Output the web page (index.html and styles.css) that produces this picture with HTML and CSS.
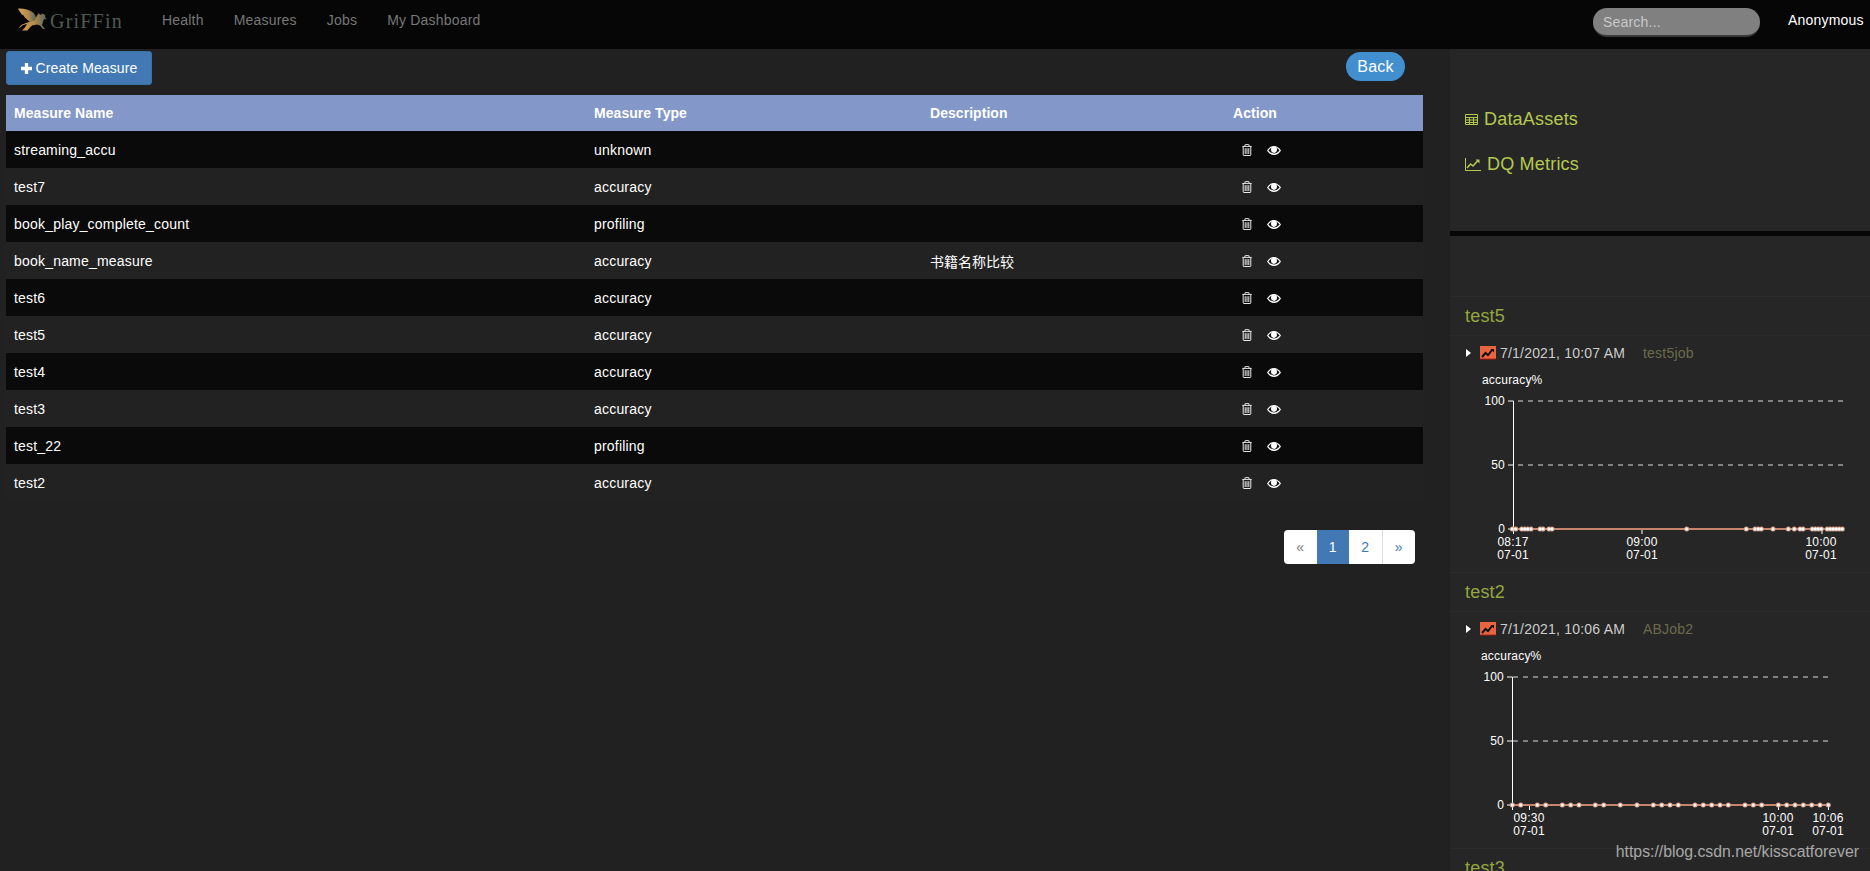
FILE: index.html
```html
<!DOCTYPE html>
<html lang="en">
<head>
    <meta charset="UTF-8">
    <meta name="viewport" content="width=device-width, initial-scale=1.0">
    <title>Griffin - Measures</title>
    <link rel="stylesheet" href="styles.css">
</head>
<body>
    <svg class="icon-defs" width="0" height="0">
        <defs>
            <linearGradient id="griffin-fill" x1="0" y1="0" x2="1" y2="0">
                <stop offset="0" stop-color="#d9a455"/>
                <stop offset="0.55" stop-color="#b58a4c"/>
                <stop offset="1" stop-color="#4e6460"/>
            </linearGradient>
            <symbol id="trash" viewBox="0 0 10 12">
                <path d="M.3 2.4h9.4M3 2.2V1q0-.6.6-.6h2.8q.6 0 .6.6v1.2M1.2 2.6v8.2q0 .7.7.7h6.2q.7 0 .7-.7V2.6" fill="none" stroke="#fff" stroke-width=".9"/>
                <path d="M3.2 4.2v5.8M5 4.2v5.8M6.8 4.2v5.8" fill="none" stroke="#fff" stroke-width=".9"/>
            </symbol>
            <symbol id="eye" viewBox="0 0 14 9">
                <path d="M0 4.5C2 1.5 4.4 0 7 0s5 1.5 7 4.5C12 7.500 9.600 9 7 9S2 7.500 0 4.500z" fill="#fff"/>
                <path d="M1.400 4.500C3 2.600 4 1.900 4.700 1.500 4.200 2.200 4 3 4 3.800c0 1.700 1.300 3.100 3 3.100s3-1.400 3-3.100c0-.8-.2-1.600-.7-2.300.7.400 1.700 1.100 3.300 3-1.700 2-3.600 3-5.600 3s-3.900-1-5.600-3z" fill="#111"/>
            </symbol>
            <symbol id="spark" viewBox="0 0 16 14">
                <rect width="16" height="14" fill="#e8653f"/>
                <path d="M0 13.300h16" stroke="#611" stroke-width="1.200"/>
                <path d="M2 11l3.500-4 2.500 2 4-5" fill="none" stroke="#111" stroke-width="2"/>
                <path d="M10.500 3h3.500v3.500z" fill="#111"/>
            </symbol>
        </defs>
    </svg>

    <div class="header">
        <a class="brand">
            <svg class="griffin" viewBox="0 0 32 24" width="32" height="24">
                <path d="M2 1.500C7 1 13 2.500 17 5.500c2 1.500 3 4 3.500 7L14 15C11 12 9 11.500 7.500 8.500 7.200 8 5.500 7.500 5 6.500 4.500 5.500 3 3.500 2 1.500z" fill="url(#griffin-fill)"/>
                <path d="M21 8.500l2-2.500 1 2 3-1.500 2.500 2-.5 1.500 2 2.500-3-.5-1 3-1 3 3 4h-2l-3-3.500-3-1-5 1-3 3 -1.500 2H6l3-3 2-3.500-4 1-3 2.500L2.500 21 6 17.500l7-2.500 6-2z" fill="url(#griffin-fill)"/>
            </svg>
            <span class="brand-name">GriFFin</span>
        </a>
        <ul class="nav">
            <li>Health</li>
            <li>Measures</li>
            <li>Jobs</li>
            <li>My Dashboard</li>
        </ul>
        <input class="search" type="text" placeholder="Search...">
        <span class="user">Anonymous</span>
    </div>

    <div class="container">
        <div class="left">
            <div class="toolbar">
                <button class="btn-create"><svg class="plus" viewBox="0 0 10 10" width="11" height="11"><path d="M5 0v10M0 5h10" stroke="#fff" stroke-width="3"/></svg>Create Measure</button>
                <button class="btn-back">Back</button>
            </div>
            <table class="measures">
                <thead>
                    <tr>
                        <th class="col-name">Measure Name</th>
                        <th class="col-type">Measure Type</th>
                        <th class="col-desc">Description</th>
                        <th>Action</th>
                    </tr>
                </thead>
                <tbody>
                    <tr><td>streaming_accu</td><td>unknown</td><td></td><td class="actions"><svg class="i-trash"><use href="#trash"/></svg><svg class="i-eye"><use href="#eye"/></svg></td></tr>
                    <tr><td>test7</td><td>accuracy</td><td></td><td class="actions"><svg class="i-trash"><use href="#trash"/></svg><svg class="i-eye"><use href="#eye"/></svg></td></tr>
                    <tr><td>book_play_complete_count</td><td>profiling</td><td></td><td class="actions"><svg class="i-trash"><use href="#trash"/></svg><svg class="i-eye"><use href="#eye"/></svg></td></tr>
                    <tr><td>book_name_measure</td><td>accuracy</td><td class="cjk">书籍名称比较</td><td class="actions"><svg class="i-trash"><use href="#trash"/></svg><svg class="i-eye"><use href="#eye"/></svg></td></tr>
                    <tr><td>test6</td><td>accuracy</td><td></td><td class="actions"><svg class="i-trash"><use href="#trash"/></svg><svg class="i-eye"><use href="#eye"/></svg></td></tr>
                    <tr><td>test5</td><td>accuracy</td><td></td><td class="actions"><svg class="i-trash"><use href="#trash"/></svg><svg class="i-eye"><use href="#eye"/></svg></td></tr>
                    <tr><td>test4</td><td>accuracy</td><td></td><td class="actions"><svg class="i-trash"><use href="#trash"/></svg><svg class="i-eye"><use href="#eye"/></svg></td></tr>
                    <tr><td>test3</td><td>accuracy</td><td></td><td class="actions"><svg class="i-trash"><use href="#trash"/></svg><svg class="i-eye"><use href="#eye"/></svg></td></tr>
                    <tr><td>test_22</td><td>profiling</td><td></td><td class="actions"><svg class="i-trash"><use href="#trash"/></svg><svg class="i-eye"><use href="#eye"/></svg></td></tr>
                    <tr><td>test2</td><td>accuracy</td><td></td><td class="actions"><svg class="i-trash"><use href="#trash"/></svg><svg class="i-eye"><use href="#eye"/></svg></td></tr>
                </tbody>
            </table>
            <ul class="pagination">
                <li class="muted">«</li>
                <li class="active">1</li>
                <li>2</li>
                <li class="last">»</li>
            </ul>
        </div>

        <div class="right">
            <div class="side-nav">
                <a class="side-link">
                    <svg width="13" height="11" viewBox="0 0 13 11"><path d="M.5.5h12v10H.500zM.5 3.500h12M.5 6h12M.5 8.500h12M4.500 3.500v7M8.500 3.500v7" fill="none" stroke="#b5c850" stroke-width="1"/></svg>
                    DataAssets
                </a>
                <a class="side-link">
                    <svg width="16" height="13" viewBox="0 0 16 13"><path d="M.5 0v12.500H16" fill="none" stroke="#b5c850"/><path d="M2 10l3.500-4 2.500 2 4.500-5" fill="none" stroke="#b5c850" stroke-width="1.600"/><path d="M10.500 1.500h4v4z" fill="#b5c850"/></svg>
                    DQ Metrics
                </a>
            </div>
            <div class="band"></div>
            <div class="spacer"></div>

            <div class="metric">
                <h4 class="metric-title">test5</h4>
                <div class="metric-row">
                    <span class="caret"></span>
                    <svg class="i-spark"><use href="#spark"/></svg>
                    <span class="metric-date">7/1/2021, 10:07 AM</span>
                    <span class="metric-job">test5job</span>
                </div>
                <svg class="chart" width="420" height="200">
                    <text class="c-name" x="32" y="16">accuracy%</text>
                    <path class="c-grid" d="M68 33H393M68 97H393"/>
                    <path class="c-axis" d="M58 33H63.500M58 97H63.500M58 161H63.500M63.500 33V166M192 161V166M372 161V166"/>
                    <text class="c-y" x="55" y="37">100</text>
                    <text class="c-y" x="55" y="101">50</text>
                    <text class="c-y" x="55" y="165">0</text>
                    <path class="c-line" d="M62 161H392"/>
                    <path class="c-dot" d="M62.300 161h0M65.700 161h0M71.700 161h0M74.700 161h0M77.700 161h0M81 161h0M90 161h0M93 161h0M99 161h0M102 161h0M236.700 161h0M296.300 161h0M305 161h0M308.300 161h0M311.300 161h0M323 161h0M338.300 161h0M344.300 161h0M350 161h0M353 161h0M362.300 161h0M365.300 161h0M368.300 161h0M371.300 161h0M377.300 161h0M380.300 161h0M383.300 161h0M386.300 161h0M389.300 161h0M392.300 161h0"/>
                    <path class="c-dot-in" d="M62.300 161h0M65.700 161h0M71.700 161h0M74.700 161h0M77.700 161h0M81 161h0M90 161h0M93 161h0M99 161h0M102 161h0M236.700 161h0M296.300 161h0M305 161h0M308.300 161h0M311.300 161h0M323 161h0M338.300 161h0M344.300 161h0M350 161h0M353 161h0M362.300 161h0M365.300 161h0M368.300 161h0M371.300 161h0M377.300 161h0M380.300 161h0M383.300 161h0M386.300 161h0M389.300 161h0M392.300 161h0"/>
                    <text class="c-x" x="63" y="178">08:17</text>
                    <text class="c-x" x="63" y="191">07-01</text>
                    <text class="c-x" x="192" y="178">09:00</text>
                    <text class="c-x" x="192" y="191">07-01</text>
                    <text class="c-x" x="371" y="178">10:00</text>
                    <text class="c-x" x="371" y="191">07-01</text>
                </svg>
            </div>

            <div class="metric">
                <h4 class="metric-title">test2</h4>
                <div class="metric-row">
                    <span class="caret"></span>
                    <svg class="i-spark"><use href="#spark"/></svg>
                    <span class="metric-date">7/1/2021, 10:06 AM</span>
                    <span class="metric-job">ABJob2</span>
                </div>
                <svg class="chart" width="420" height="200">
                    <text class="c-name" x="31" y="16">accuracy%</text>
                    <path class="c-grid" d="M63 33H378M63 97H378"/>
                    <path class="c-axis" d="M57 33H62.500M57 97H62.500M57 161H62.500M62.500 33V166M79.500 161V166M328.500 161V166M378.500 161V166"/>
                    <text class="c-y" x="54" y="37">100</text>
                    <text class="c-y" x="54" y="101">50</text>
                    <text class="c-y" x="54" y="165">0</text>
                    <path class="c-line" d="M62 161H378"/>
                    <path class="c-dot" d="M62.300 161h0M70.700 161h0M87.300 161h0M95.700 161h0M112.300 161h0M120.700 161h0M129 161h0M145.300 161h0M153.700 161h0M170.300 161h0M187 161h0M203.300 161h0M211.700 161h0M220 161h0M228.300 161h0M245 161h0M253.300 161h0M261.700 161h0M270 161h0M278.300 161h0M295 161h0M303.300 161h0M311.700 161h0M328.300 161h0M336.700 161h0M345 161h0M353.300 161h0M361.700 161h0M370 161h0M378.300 161h0"/>
                    <path class="c-dot-in" d="M62.300 161h0M70.700 161h0M87.300 161h0M95.700 161h0M112.300 161h0M120.700 161h0M129 161h0M145.300 161h0M153.700 161h0M170.300 161h0M187 161h0M203.300 161h0M211.700 161h0M220 161h0M228.300 161h0M245 161h0M253.300 161h0M261.700 161h0M270 161h0M278.300 161h0M295 161h0M303.300 161h0M311.700 161h0M328.300 161h0M336.700 161h0M345 161h0M353.300 161h0M361.700 161h0M370 161h0M378.300 161h0"/>
                    <text class="c-x" x="79" y="178">09:30</text>
                    <text class="c-x" x="79" y="191">07-01</text>
                    <text class="c-x" x="328" y="178">10:00</text>
                    <text class="c-x" x="328" y="191">07-01</text>
                    <text class="c-x" x="378" y="178">10:06</text>
                    <text class="c-x" x="378" y="191">07-01</text>
                </svg>
            </div>

            <div class="metric">
                <h4 class="metric-title">test3</h4>
            </div>
        </div>
    </div>

    <div class="watermark">https://blog.csdn.net/kisscatforever</div>
</body>
</html>
```

FILE: styles.css
```css
html, body {
    margin: 0;
    padding: 0;
    height: 100%;
    overflow: hidden;
    font-family: "Liberation Sans", Arial, sans-serif;
    font-size: 14px;
    letter-spacing: 0.2px;
    background: #212121;
    color: white;
}
*, *::before, *::after {
    box-sizing: border-box;
}
.icon-defs {
    position: absolute;
}
.header {
    display: flex;
    align-items: flex-start;
    height: 49px;
    background: #060606;
}
.brand {
    display: flex;
    align-items: flex-start;
    width: 162px;
    padding: 7px 0 0 16px;
}
.brand-name {
    margin: 3px 0 0 2px;
    font-family: "Liberation Serif", serif;
    font-size: 20px;
    letter-spacing: 1.2px;
    color: #4e5a55;
}
.nav {
    display: flex;
    gap: 30px;
    list-style: none;
    margin: 0;
    padding: 12px 0 0 0;
    color: #777;
    line-height: 16px;
}
.search {
    width: 167px;
    height: 29px;
    margin: 8px 0 0 auto;
    padding: 0 10px;
    border: 0;
    border-bottom: 2px solid #3a3a3a;
    border-radius: 14px;
    background: #808080;
    font: 14px "Liberation Sans", Arial, sans-serif;
    letter-spacing: 0.2px;
    color: #fff;
}
.search::placeholder {
    color: #c9c9c9;
}
.user {
    width: 82px;
    margin: 12px 0 0 28px;
    line-height: 16px;
    white-space: nowrap;
}
.container {
    display: flex;
    height: 822px;
}
.left {
    width: 1450px;
    padding: 2px 0 0 6px;
}
.toolbar {
    display: flex;
    justify-content: space-between;
    align-items: flex-start;
    width: 1399px;
    margin-bottom: 10px;
}
.btn-create {
    display: flex;
    align-items: center;
    justify-content: center;
    gap: 4px;
    height: 34px;
    width: 146px;
    padding: 0;
    border: 1px solid #3a6fa8;
    border-radius: 3px;
    background: #4279b5;
    color: white;
    font: 14px "Liberation Sans", Arial, sans-serif;
    letter-spacing: 0.1px;
}
.btn-back {
    height: 29px;
    width: 59px;
    margin-top: 1px;
    padding: 1px 0 0 0;
    border: 0;
    border-radius: 15px;
    background: #428fd0;
    color: white;
    font: 16px "Liberation Sans", Arial, sans-serif;
    letter-spacing: 0.2px;
}
.measures {
    width: 1417px;
    table-layout: fixed;
    border-collapse: collapse;
}
.measures th {
    height: 36px;
    padding: 0 9px;
    background: #8397c8;
    text-align: left;
    font-weight: bold;
    letter-spacing: 0.05px;
}
.col-name { width: 579px; }
.col-type { width: 336px; }
.col-desc { width: 303px; }
.measures td {
    height: 37px;
    padding: 0 9px;
}
.measures td.cjk {
    font-family: "Noto Sans CJK SC", sans-serif;
    letter-spacing: 0;
}
.measures th:first-child, .measures td:first-child {
    padding-left: 8px;
}
.measures tbody tr:nth-child(odd) {
    background: #0a0a0a;
}
.measures tbody tr:nth-child(even) {
    background: #222;
}
.actions {
    line-height: 0;
}
.i-trash {
    width: 10px;
    height: 12px;
    margin: 0 0 0 9px;
}
.i-eye {
    width: 14px;
    height: 9px;
    margin: 0 0 1px 15px;
    vertical-align: baseline;
}
.pagination {
    display: flex;
    list-style: none;
    width: 131px;
    height: 34px;
    margin: 29px 0 0 1278px;
    padding: 0;
    background: white;
    border-radius: 4px;
    overflow: hidden;
    color: #4279b5;
}
.pagination li {
    flex: 1;
    display: flex;
    align-items: center;
    justify-content: center;
}
.pagination .muted {
    color: #777;
}
.pagination .active {
    background: #4279b5;
    color: white;
}
.pagination .last {
    border-left: 1px solid #ddd;
}
.right {
    width: 420px;
    background: #262626;
    overflow: hidden;
}
.side-nav {
    height: 182px;
    padding-top: 55px;
}
.side-link {
    display: flex;
    align-items: center;
    gap: 6px;
    height: 30px;
    margin-bottom: 15px;
    padding-left: 15px;
    font-size: 18px;
    color: #b5c850;
}
.band {
    height: 5px;
    background: #060606;
}
.spacer {
    height: 60px;
}
.metric {
    height: 276px;
    border-top: 1px solid #2c2c2c;
}
.metric-title {
    height: 39px;
    margin: 0;
    padding: 9px 0 0 15px;
    border-bottom: 1px solid #2b2b2b;
    font-size: 18px;
    font-weight: normal;
    line-height: 20px;
    color: #94a640;
}
.metric-row {
    display: flex;
    align-items: center;
    height: 32px;
    padding: 2px 0 0 16px;
}
.caret {
    width: 0;
    height: 0;
    border-left: 5px solid white;
    border-top: 4px solid transparent;
    border-bottom: 4px solid transparent;
}
.i-spark {
    width: 16px;
    height: 14px;
    margin-left: 9px;
}
.metric-date {
    margin-left: 4px;
    color: #ccc;
}
.metric-job {
    margin-left: 18px;
    color: #6b6b4c;
}
.chart {
    display: block;
    font-size: 12px;
}
.chart text {
    fill: white;
    font-family: "Liberation Sans", Arial, sans-serif;
}
.c-y {
    text-anchor: end;
}
.c-x {
    text-anchor: middle;
}
.c-grid {
    stroke: #ddd;
    stroke-dasharray: 5 5;
    fill: none;
}
.c-axis {
    stroke: white;
    fill: none;
}
.c-line {
    stroke: #c9846c;
    stroke-width: 2;
    fill: none;
}
.c-dot {
    stroke: #d9a08c;
    stroke-width: 5;
    stroke-linecap: round;
    fill: none;
}
.c-dot-in {
    stroke: #fff;
    stroke-width: 3;
    stroke-linecap: round;
    fill: none;
}
.watermark {
    position: absolute;
    right: 11px;
    bottom: 10px;
    font-size: 15.800px;
    letter-spacing: 0;
    color: rgba(255, 255, 255, 0.6);
}
```
